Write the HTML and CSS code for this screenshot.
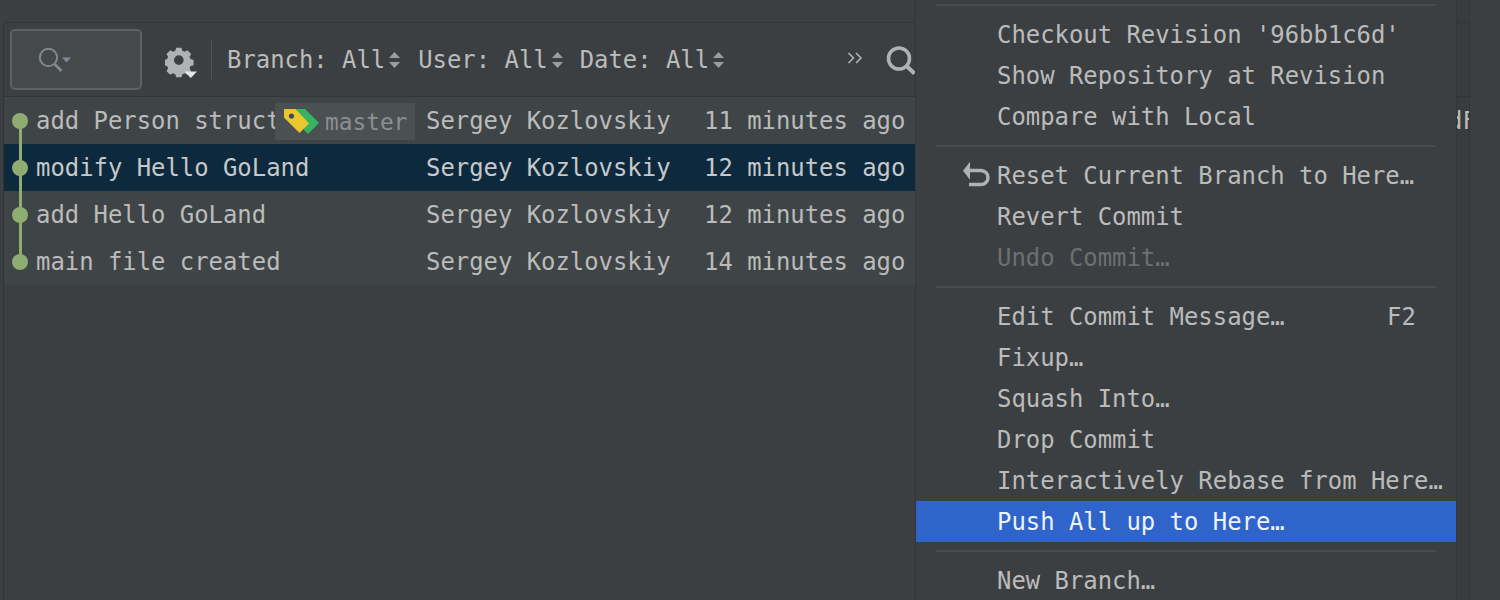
FILE: index.html
```html
<!DOCTYPE html>
<html lang="en">
<head>
<meta charset="utf-8">
<title>GoLand Git log</title>
<link rel="stylesheet" href="styles.css">
</head>
<body>
<div class="app">
  <div class="gutter-left"></div>
  <main class="main">
    <div class="topbar"></div>
    <div class="toolbar">
      <div class="search-box">
        <svg class="search-small" width="34" height="26" viewBox="0 0 34 26"><circle cx="10.500" cy="9.500" r="8.700" fill="none" stroke="#7f8b91" stroke-width="2"/><path d="M16.500 16l7 7" stroke="#7f8b91" stroke-width="2.600" fill="none"/><path d="M24 9.500h9l-4.500 5z" fill="#7f8b91"/></svg>
      </div>
      <svg class="gear" width="34" height="34" viewBox="0 0 34 34"><path fill="#afb1b3" fill-rule="evenodd" d="M11 2h6l1 3.500 2.600 1.100 3.200-1.800 4.200 4.200-1.800 3.200 1.100 2.600 3.500 1v6l-3.500 1-1.100 2.600 1.800 3.200-4.200 4.200-3.200-1.800-2.600 1.100-1 3.500h-6l-1-3.500-2.600-1.100-3.200 1.800-4.200-4.200 1.800-3.200-1.100-2.600-3.500-1v-6l3.500-1 1.100-2.600-1.800-3.200 4.200-4.200 3.200 1.800 2.600-1.100zM14 10.500a5.500 5.500 0 1 0 0 11 5.500 5.500 0 0 0 0-11z" transform="translate(1.500 -1) scale(.88)"/><path fill="#e6e6e6" d="M19.500 24.500h12.500l-6.200 6.500z"/></svg>
      <div class="toolbar-sep"></div>
      <div class="filter filter-branch">Branch: All<svg class="updown" width="11" height="18" viewBox="0 0 11 18"><path d="M5.500 1L11 7H0zM0 11h11l-5.500 6z" fill="#9a9c9e"/></svg></div>
      <div class="filter filter-user">User: All<svg class="updown" width="11" height="18" viewBox="0 0 11 18"><path d="M5.500 1L11 7H0zM0 11h11l-5.500 6z" fill="#9a9c9e"/></svg></div>
      <div class="filter">Date: All<svg class="updown" width="11" height="18" viewBox="0 0 11 18"><path d="M5.500 1L11 7H0zM0 11h11l-5.500 6z" fill="#9a9c9e"/></svg></div>
      <svg class="chevrons" width="16" height="14" viewBox="0 0 16 14"><path d="M1.500 2l5 5-5 5M9 2l5 5-5 5" fill="none" stroke="#b5b7b9" stroke-width="1.500"/></svg>
      <svg class="search-big" width="30" height="30" viewBox="0 0 30 30"><circle cx="13" cy="13.500" r="10.500" fill="none" stroke="#afb1b3" stroke-width="3.600"/><path d="M20.500 21l8 7.500" stroke="#afb1b3" stroke-width="4" fill="none"/></svg>
    </div>
    <div class="log">
      <div class="row">
        <span class="node node-first"></span><span class="msg">add Person struct</span><span class="author">Sergey Kozlovskiy</span><span class="date">11 minutes ago</span>
        <span class="tag">
          <svg class="tag-icon" width="36" height="26" viewBox="0 0 36 26"><path d="M13 0h9l14 14-11 11-4-4z" fill="#36b45f"/><path d="M1 0h11.500L26 14.500 16.500 24 1 8.500z" fill="#e8c82e"/><circle cx="8.500" cy="7" r="2.600" fill="#3d4a5c"/></svg>
          master
        </span>
      </div>
      <div class="row row-selected">
        <span class="node"></span><span class="msg">modify Hello GoLand</span><span class="author">Sergey Kozlovskiy</span><span class="date">12 minutes ago</span>
      </div>
      <div class="row">
        <span class="node"></span><span class="msg">add Hello GoLand</span><span class="author">Sergey Kozlovskiy</span><span class="date">12 minutes ago</span>
      </div>
      <div class="row">
        <span class="node node-last"></span><span class="msg">main file created</span><span class="author">Sergey Kozlovskiy</span><span class="date">14 minutes ago</span>
      </div>
    </div>
  </main>
  <aside class="strip">
    <div class="strip-top"></div>
    <div class="strip-bar"></div>
    <div class="strip-rest"><span class="strip-clip">dF</span></div>
  </aside>
  <div class="side"></div>

  <nav class="menu">
    <div class="menu-sep"></div>
    <div class="item">Checkout Revision '96bb1c6d'</div>
    <div class="item">Show Repository at Revision</div>
    <div class="item">Compare with Local</div>
    <div class="menu-sep"></div>
    <div class="item">
      <svg class="undo" width="28" height="28" viewBox="0 0 28 28"><path d="M0 9.700L7 .7v18z" fill="#afb1b3"/><path d="M6 9.500h12a7 7 0 0 1 0 14H6" fill="none" stroke="#afb1b3" stroke-width="3.400"/></svg>
      Reset Current Branch to Here…
    </div>
    <div class="item">Revert Commit</div>
    <div class="item item-disabled">Undo Commit…</div>
    <div class="menu-sep"></div>
    <div class="item">Edit Commit Message…<span class="shortcut">F2</span></div>
    <div class="item">Fixup…</div>
    <div class="item">Squash Into…</div>
    <div class="item">Drop Commit</div>
    <div class="item">Interactively Rebase from Here…</div>
    <div class="item item-active">Push All up to Here…</div>
    <div class="menu-sep"></div>
    <div class="item">New Branch…</div>
  </nav>
</div>
</body>
</html>
```
FILE: styles.css
```css
* { box-sizing: border-box; }
html, body { margin: 0; height: 100%; overflow: hidden; }
body {
  background: #3c3f41;
  color: #bbbbbb;
  font-family: "DejaVu Sans Mono", "Liberation Mono", monospace;
  font-size: 23.9px;
  line-height: 30px;
}
.app { position: relative; display: flex; width: 1500px; height: 600px; overflow: hidden; }
.gutter-left { width: 4px; border-right: 1px solid #323436; margin-top: 23px; }
.main { width: 912px; margin-right: 540px; display: flex; flex-direction: column; }
.topbar { height: 23px; border-bottom: 1px solid #323436; background: #3c3f41; }
.toolbar {
  height: 74px;
  display: flex;
  align-items: center;
  border-bottom: 1px solid #323436;
  padding-left: 6px;
  white-space: nowrap;
}
.search-box {
  width: 132px;
  height: 61px;
  border: 2px solid #5e6162;
  border-radius: 5px;
  background: #45494a;
  display: flex;
  align-items: center;
  padding-left: 26px;
  flex: none;
}
.search-small { margin-top: 2px; }
.gear { margin-left: 23px; margin-top: 8px; flex: none; }
.toolbar-sep { width: 1px; height: 39px; background: #515455; margin-left: 12px; margin-right: 15px; flex: none; }
.filter { display: flex; align-items: center; flex: none; }
.filter-branch { margin-right: 18px; }
.filter-user { margin-right: 17px; }
.updown { margin-left: 4px; }
.chevrons { margin-left: 123px; margin-top: -4px; flex: none; }
.search-big { margin-left: 23px; flex: none; }
.row {
  position: relative;
  height: 47px;
  display: grid;
  grid-template-columns: 32px 390px 278px 1fr;
  align-items: center;
  background: #3f4546;
  white-space: nowrap;
}
.row-selected { background: #0d293e; color: #c6c8ca; }
.node { position: relative; align-self: stretch; }
.node::before {
  content: "";
  position: absolute;
  left: 14.5px;
  top: 0;
  bottom: 0;
  width: 3px;
  background: #8fac72;
}
.node::after {
  content: "";
  position: absolute;
  left: 8px;
  top: 15.5px;
  width: 16px;
  height: 16px;
  border-radius: 50%;
  background: #8fac72;
}
.node-first::before { top: 23px; }
.node-last::before { bottom: 23px; }
.msg { overflow: hidden; }
.tag {
  position: absolute;
  left: 271px;
  top: 6px;
  width: 140px;
  height: 37px;
  background: #4b5153;
  color: #8c8e90;
  font-size: 22.8px;
  display: flex;
  align-items: center;
  padding-left: 8px;
  gap: 7px;
}
.tag-icon { flex: none; margin-right: -1px; }
.strip { width: 14px; flex: none; border-left: 1px solid #343638; border-right: 1px solid #323436; background: #393b3d; overflow: hidden; }
.strip-top { height: 23px; border-bottom: 1px solid #323436; }
.strip-bar { height: 74px; border-bottom: 1px solid #323436; }
.strip-rest { height: 47px; position: relative; overflow: hidden; }
.strip-clip { position: absolute; left: -9px; top: 9px; }
.side { flex: 1; }
.menu {
  position: absolute;
  left: 915px;
  top: 0;
  width: 541px;
  padding-top: 4px;
  background: #3c3f41;
  border-left: 1px solid #343638;
}
.menu-sep { height: 2px; margin: 0 20px 8px; background: #4b4b4b; }
.item {
  position: relative;
  height: 41px;
  padding-left: 81px;
  display: flex;
  align-items: center;
  white-space: nowrap;
}
.item + .menu-sep { margin-top: 8px; }
.item-disabled { color: #6d6f71; }
.item-active { background: #2f65ca; color: #eef2fa; }
.undo { position: absolute; left: 47px; top: 6px; }
.shortcut { position: absolute; left: 471px; }
```
